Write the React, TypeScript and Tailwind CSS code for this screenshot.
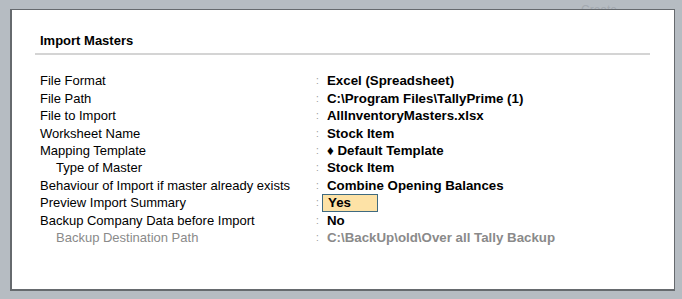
import React from "react";

type Row = {
  label: string;
  value: React.ReactNode;
  indent?: boolean;
  muted?: boolean;
  highlight?: boolean;
};

const rows: Row[] = [
  { label: "File Format", value: "Excel (Spreadsheet)" },
  { label: "File Path", value: "C:\\Program Files\\TallyPrime (1)" },
  { label: "File to Import", value: "AllInventoryMasters.xlsx" },
  { label: "Worksheet Name", value: "Stock Item" },
  { label: "Mapping Template", value: "\u2666 Default Template" },
  { label: "Type of Master", value: "Stock Item", indent: true },
  { label: "Behaviour of Import if master already exists", value: "Combine Opening Balances" },
  { label: "Preview Import Summary", value: "Yes", highlight: true },
  { label: "Backup Company Data before Import", value: "No" },
  { label: "Backup Destination Path", value: "C:\\BackUp\\old\\Over all Tally Backup", indent: true, muted: true },
];

export default function App() {
  return (
    <div
      className="relative w-[682px] h-[299px] overflow-hidden bg-[#b6bcc2] pt-[9px] pl-[10px]"
      style={{ fontFamily: '"Liberation Sans", Arial, sans-serif' }}
    >
      <div className="absolute left-[581px] top-[1px] text-[12px] text-[#a3a9b0]">Create</div>
      <div className="relative w-[665px] h-[282px] bg-white border-t border-r border-l-2 border-b-2 border-[#666a6e]">
        <div className="pt-[23px] pl-[28px] text-[13px] font-bold text-black leading-[16px]">Import Masters</div>
        <div className="ml-[23px] mt-[4px] w-[615px] h-[2px] bg-[#d4d4d4]" />
        <div className="mt-[17px] pl-[28px]">
          {rows.map((r) => (
            <div key={r.label} className="flex items-center h-[17.45px] text-[13px] leading-[15px]">
              <div
                className={`w-[276px] shrink-0 ${r.indent ? "pl-[16px]" : ""} ${r.muted ? "text-[#8a8a8a]" : "text-black"}`}
              >
                {r.label}
              </div>
              <div className="w-[11px] shrink-0 text-[10px] text-[#9a9a9a]">:</div>
              {r.highlight ? (
                <div className="-ml-[5px] pl-[5px] w-[56px] h-[18px] flex items-center bg-[#fde2a6] border border-[#3f6a80] font-bold text-[13.3px] text-black">
                  {r.value}
                </div>
              ) : (
                <div className={`font-bold text-[13.3px] ${r.muted ? "text-[#8a8a8a]" : "text-black"}`}>{r.value}</div>
              )}
            </div>
          ))}
        </div>
      </div>
    </div>
  );
}
